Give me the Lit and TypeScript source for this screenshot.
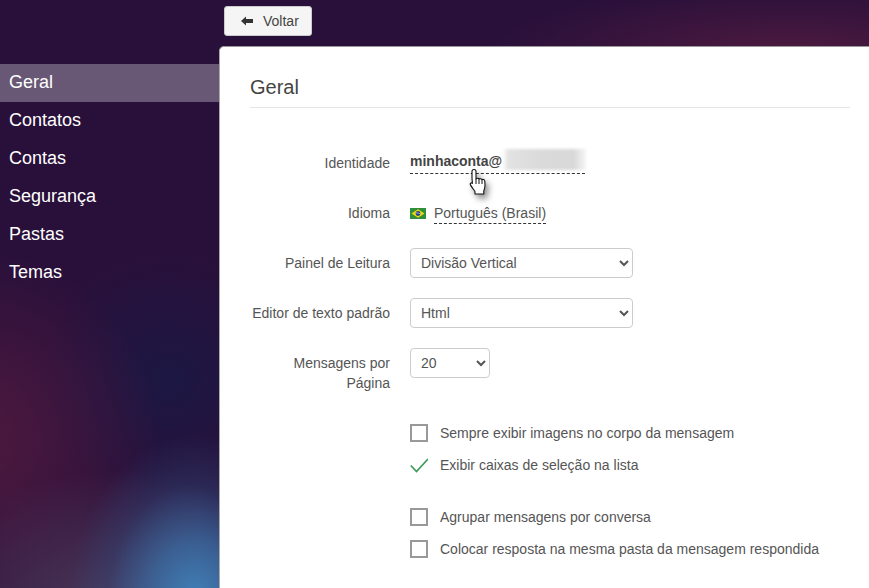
import { LitElement, html, css } from "lit";
import { customElement } from "lit/decorators.js";

@customElement("app-root")
export class AppRoot extends LitElement {
  static styles = css`
    :host {
      display: grid;
      grid-template-columns: 219px 1fr;
      grid-template-rows: 46px 1fr;
      height: 588px;
      overflow: hidden;
      font-family: "Liberation Sans", Arial, sans-serif;
      font-size: 14px;
      line-height: 20px;
      color: #555;
      background:
        radial-gradient(ellipse 125px 165px at 195px 600px, rgba(64, 130, 185, 1) 0%, rgba(60, 115, 170, 0.75) 35%, rgba(50, 80, 130, 0.35) 70%, rgba(40, 50, 100, 0) 100%),
        radial-gradient(ellipse 190px 150px at 110px 620px, rgba(90, 75, 105, 0.75) 0%, rgba(80, 60, 95, 0) 100%),
        radial-gradient(ellipse 190px 190px at -30px 440px, rgba(90, 28, 65, 0.8) 0%, rgba(80, 25, 60, 0) 100%),
        radial-gradient(ellipse 300px 70px at 790px 55px, rgba(85, 28, 65, 0.85) 0%, rgba(80, 25, 60, 0) 100%),
        radial-gradient(ellipse 130px 130px at 170px 380px, rgba(27, 24, 68, 0.95) 0%, rgba(27, 24, 68, 0) 100%),
        #29103a;
    }
    .top {
      grid-column: 1 / 3;
      display: flex;
      align-items: flex-start;
      padding: 6px 0 0 224px;
    }
    .back {
      display: flex;
      align-items: center;
      gap: 10px;
      box-sizing: border-box;
      width: 88px;
      height: 30px;
      padding: 0 0 0 16px;
      background: #f5f5f5;
      border: 1px solid #ccc;
      border-radius: 3px;
      font: inherit;
      color: #444;
    }
    .back svg { width: 12px; height: 10px; display: block; }
    nav {
      display: flex;
      flex-direction: column;
      padding-top: 18px;
    }
    nav a {
      display: block;
      height: 38px;
      line-height: 36px;
      padding-left: 9px;
      font-size: 18px;
      color: #fff;
    }
    nav a.active { background: rgba(255, 255, 255, 0.3); }
    .panel {
      background: #fff;
      border-top: 1px solid #999;
      border-left: 1px solid #aaa;
      border-top-left-radius: 5px;
      padding: 29px 19px 0 30px;
    }
    h2 {
      margin: 0 0 40px;
      font-size: 20px;
      font-weight: 400;
      line-height: 22px;
      padding-bottom: 9px;
      border-bottom: 1px solid #e5e5e5;
      color: #444;
    }
    .row {
      display: grid;
      grid-template-columns: 140px 1fr;
      column-gap: 20px;
      align-items: start;
      min-height: 30px;
      margin-bottom: 20px;
    }
    .row.last { margin-bottom: 24px; }
    label.lbl {
      text-align: right;
      padding-top: 5px;
      color: #555;
    }
    .value { position: relative; display: flex; align-items: center; height: 30px; }
    .account {
      display: inline-flex;
      align-items: center;
      width: 175px;
      height: 26px;
      margin-top: 0;
      border-bottom: 1px dashed #333;
      box-sizing: border-box;
      font-weight: 700;
      color: #444;
      position: relative;
      top: -2px;
    }
    .blur {
      position: absolute;
      left: 93px;
      top: 1px;
      width: 83px;
      height: 21px;
      background: linear-gradient(90deg, #fff 0%, #e2e2e2 6%, #dadada 45%, #d8d8d8 85%, #f6f6f6 100%);
      filter: blur(1.5px);
    }
    .cursor {
      position: absolute;
      left: 58px;
      top: 20px;
      width: 22px;
      height: 28px;
      filter: drop-shadow(3px 4px 3px rgba(0, 0, 0, 0.45));
    }
    .flag { width: 16px; height: 11px; display: block; margin-right: 8px; }
    .lang { border-bottom: 1px dashed #333; padding-bottom: 0; line-height: 20px; margin-top: 1px; }
    select {
      display: block;
      box-sizing: border-box;
      height: 30px;
      padding: 0 6px;
      background: #fff;
      border: 1px solid #ccc;
      border-radius: 4px;
      font: inherit;
      color: #555;
    }
    select.wide { width: 223px; }
    select.small { width: 80px; }
    .checks { padding-left: 160px; display: flex; flex-direction: column; }
    .check {
      display: flex;
      align-items: center;
      gap: 12px;
      height: 32px;
    }
    .group-gap { height: 20px; }
    .box {
      box-sizing: border-box;
      width: 18px;
      height: 18px;
      border: 2px solid #999;
      flex: none;
    }
    .tick { width: 18px; height: 18px; flex: none; display: block; }
  `;

  render() {
    return html`
      <div class="top">
        <button class="back">
          <svg viewBox="0 0 12 10"><path d="M0 5 5 0.5V3H12V7H5V9.5Z" fill="#333" /></svg>
          Voltar
        </button>
      </div>
      <nav>
        <a class="active">Geral</a>
        <a>Contatos</a>
        <a>Contas</a>
        <a>Segurança</a>
        <a>Pastas</a>
        <a>Temas</a>
      </nav>
      <main class="panel">
        <h2>Geral</h2>
        <div class="row">
          <label class="lbl">Identidade</label>
          <div class="value">
            <span class="account">minhaconta@<span class="blur"></span></span>
            <svg class="cursor" viewBox="0 0 22 28">
              <path
                d="M6 1.5c1.2 0 2 .8 2 2V11c.4-.9 2.6-1 3 .3.5-.9 2.6-.9 3 .5.7-.7 2.6-.4 2.8 1.2l.2 4.5c0 2.2-.6 3.6-1.2 5.2V26H7v-2.5c-1.2-1.8-3-4-4.6-6.6-.8-1.400.8-2.600 2-1.500L4 10V3.500c0-1.200.8-2 2-2Z"
                fill="#fff" stroke="#111" stroke-width="1.100" stroke-linejoin="round" />
              <path d="M8 11v5M11 11.500v4.500M14 12v4" stroke="#111" stroke-width="1" fill="none" />
            </svg>
          </div>
        </div>
        <div class="row">
          <label class="lbl">Idioma</label>
          <div class="value">
            <svg class="flag" viewBox="0 0 16 11">
              <rect width="16" height="11" fill="#2f8f3a" />
              <path d="M8 1.200 14.500 5.500 8 9.800 1.500 5.500Z" fill="#f2d80f" />
              <circle cx="8" cy="5.500" r="2.400" fill="#1c3f8f" />
              <path d="M5.800 5c1.500-.3 3.200 0 4.400 1" stroke="#fff" stroke-width=".6" fill="none" />
            </svg>
            <span class="lang">Português (Brasil)</span>
          </div>
        </div>
        <div class="row">
          <label class="lbl">Painel de Leitura</label>
          <select class="wide"><option>Divisão Vertical</option></select>
        </div>
        <div class="row">
          <label class="lbl">Editor de texto padrão</label>
          <select class="wide"><option>Html</option></select>
        </div>
        <div class="row last">
          <label class="lbl">Mensagens por Página</label>
          <select class="small"><option>20</option></select>
        </div>
        <div class="checks">
          <div class="check"><span class="box"></span>Sempre exibir imagens no corpo da mensagem</div>
          <div class="check">
            <svg class="tick" viewBox="0 0 18 18"><path d="M.800 9.500 6.500 15.500 18 3" fill="none" stroke="#3f9a5f" stroke-width="1.800" /></svg>
            Exibir caixas de seleção na lista
          </div>
          <div class="group-gap"></div>
          <div class="check"><span class="box"></span>Agrupar mensagens por conversa</div>
          <div class="check"><span class="box"></span>Colocar resposta na mesma pasta da mensagem respondida</div>
        </div>
      </main>
    `;
  }
}
